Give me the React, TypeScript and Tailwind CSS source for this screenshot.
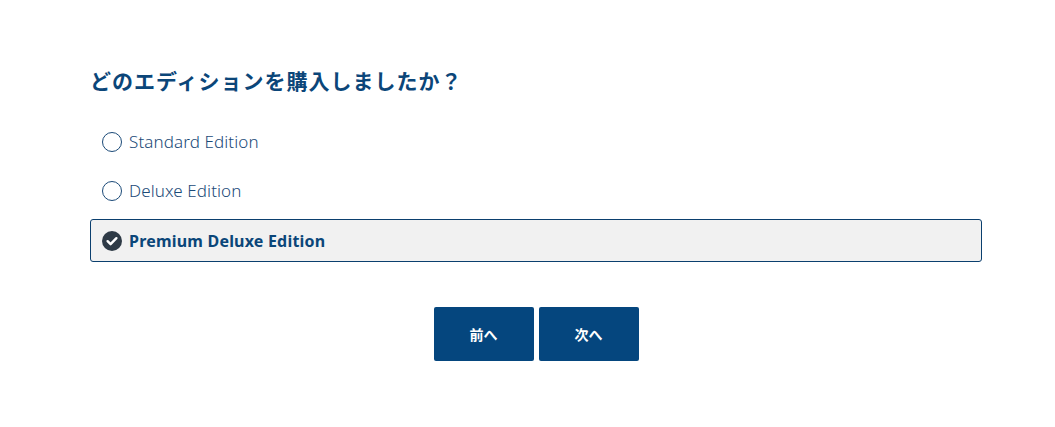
import { useState } from "react";

const options = ["Standard Edition", "Deluxe Edition", "Premium Deluxe Edition"];

export default function App() {
  const [selected, setSelected] = useState(2);

  return (
    <div
      className="min-h-[427px] bg-white pt-[66px] pl-[90px]"
      style={{ fontFamily: '"Noto Sans", "Noto Sans CJK JP", sans-serif' }}
    >
      <div className="w-[892px]">
        <h1 className="text-[21px] font-bold leading-[30px] text-[#0b4679] tracking-[1px]">
          どのエディションを購入しましたか？
        </h1>
        <div className="mt-[24px] flex flex-col gap-[6px]">
          {options.map((opt, i) => {
            const active = i === selected;
            return (
              <button
                key={opt}
                onClick={() => setSelected(i)}
                className={
                  active
                    ? "mt-[1px] flex h-[43px] items-center gap-[7px] rounded-[3px] border border-[#0b3f6e] bg-[#f1f1f1] pl-[11px] text-left"
                    : "flex h-[43px] items-center gap-[7px] rounded-[3px] border border-transparent pl-[11px] text-left"
                }
              >
                {active ? (
                  <svg width="20" height="20" viewBox="0 0 20 20">
                    <circle cx="10" cy="10" r="10" fill="#2e3a46" />
                    <path
                      d="M5.6 10.2l3 3 5.8-6"
                      fill="none"
                      stroke="#fff"
                      strokeWidth="2.4"
                      strokeLinecap="round"
                      strokeLinejoin="round"
                    />
                  </svg>
                ) : (
                  <span className="block h-[20px] w-[20px] rounded-full border-[1.5px] border-[#1b4a78]" />
                )}
                <span
                  className={
                    active
                      ? "text-[16px] font-bold tracking-[0.2px] text-[#0b4679]"
                      : "text-[17px] font-light tracking-[0.1px] text-[#1b4a78]"
                  }
                >
                  {opt}
                </span>
              </button>
            );
          })}
        </div>
        <div className="mt-[45px] flex justify-center gap-[5px]">
          <button className="h-[54px] w-[100px] rounded-[2px] bg-[#05467e] text-[14px] font-bold text-white">
            前へ
          </button>
          <button className="h-[54px] w-[100px] rounded-[2px] bg-[#05467e] text-[14px] font-bold text-white">
            次へ
          </button>
        </div>
      </div>
    </div>
  );
}
